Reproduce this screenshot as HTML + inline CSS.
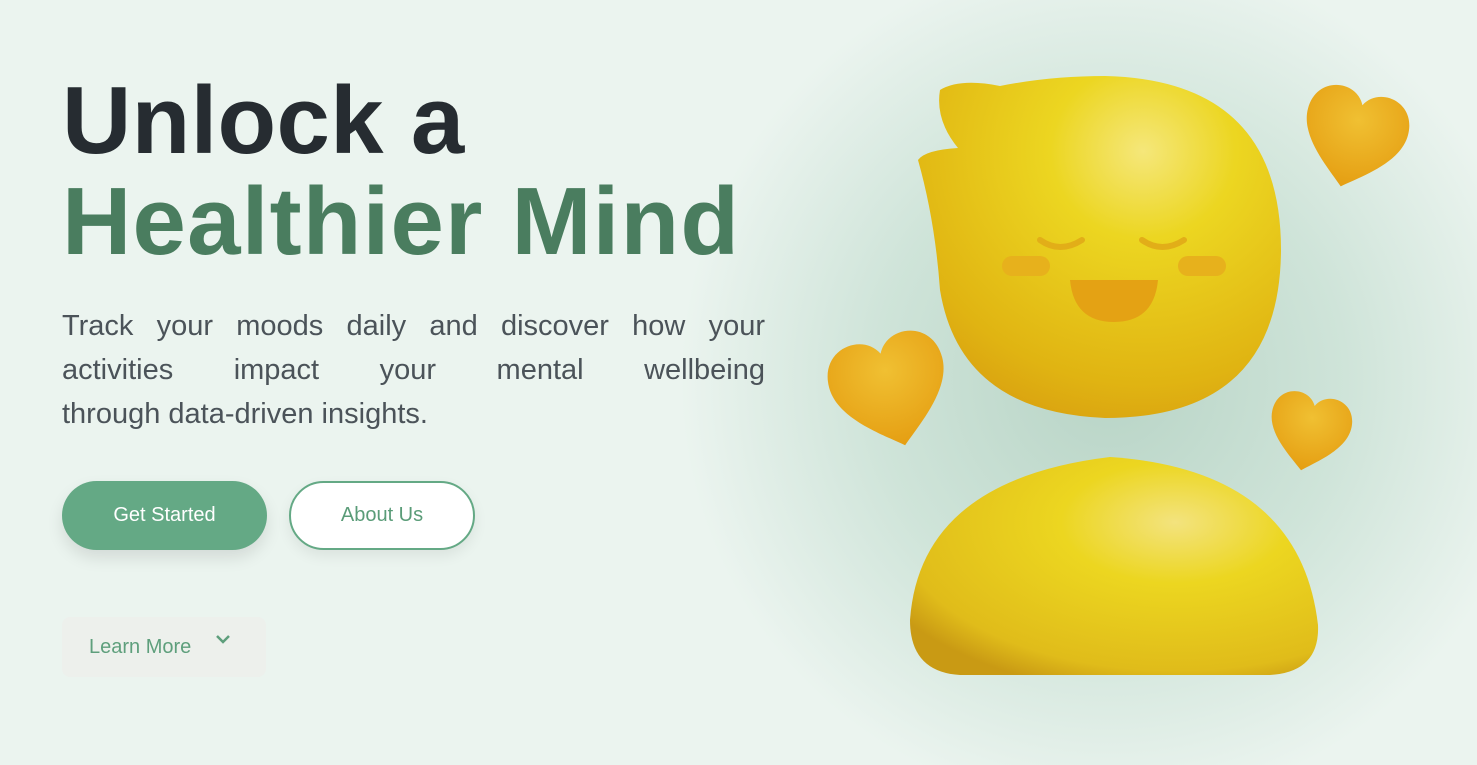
<!DOCTYPE html>
<html><head><meta charset="utf-8"><style>
html,body{margin:0;padding:0}
body{width:1477px;height:765px;overflow:hidden;position:relative;background:#ebf4ef;font-family:"Liberation Sans",sans-serif}
h1{position:absolute;left:62px;top:70px;margin:0;font-size:96px;line-height:101px;font-weight:bold;color:#262c31;letter-spacing:0.3px}
h1 span{color:#4a7d5f;letter-spacing:1.2px}
.p{position:absolute;left:62px;top:304px;width:703px;margin:0;font-size:29px;line-height:44px;color:#4b5359}
.p div{text-align:justify;text-align-last:justify;white-space:nowrap}
.p div.l{text-align-last:left}
.b{position:absolute;top:481px;height:69px;border-radius:35px;box-sizing:border-box;font-size:20px;display:flex;align-items:center;justify-content:center}
.g{left:62px;width:205px;background:#64a985;color:#fff;box-shadow:0 8px 16px rgba(0,0,0,.1)}
.w{left:289px;width:186px;background:#fff;border:2px solid #64a985;color:#5a9c78;box-shadow:0 6px 14px rgba(0,0,0,.07)}
.lm{position:absolute;left:62px;top:617px;width:204px;height:60px;background:#edf0ec;border-radius:8px;color:#5e9f7c;font-size:20px}
.lm span{position:absolute;left:27px;top:19px}
</style></head><body>
<svg width="1477" height="765" style="position:absolute;left:0;top:0">
<defs>
<radialGradient id="bg" cx="1110" cy="380" r="430" gradientUnits="userSpaceOnUse"><stop offset="0" stop-color="#b8d4c6"/><stop offset=".55" stop-color="#cfe4d9"/><stop offset="1" stop-color="#ebf4ef"/></radialGradient>
<radialGradient id="y" cx=".62" cy=".22" r=".85"><stop offset="0" stop-color="#f5e77a"/><stop offset=".3" stop-color="#ecd621"/><stop offset=".8" stop-color="#e0b412"/><stop offset="1" stop-color="#d9a010"/></radialGradient>
<radialGradient id="yb" cx=".65" cy=".3" r=".8"><stop offset="0" stop-color="#f3e37e"/><stop offset=".35" stop-color="#ecd620"/><stop offset=".85" stop-color="#e0bc1a"/><stop offset="1" stop-color="#c99a14"/></radialGradient>
<radialGradient id="h" cx=".5" cy=".3" r=".7"><stop offset="0" stop-color="#f0c032"/><stop offset="1" stop-color="#e59e12"/></radialGradient>
<path id="hrt" d="M0 -25 C10 -45 45 -40 45 -10 C45 15 15 35 0 48 C-15 35 -45 15 -45 -10 C-45 -40 -10 -45 0 -25Z"/>
</defs>
<rect x="640" y="0" width="837" height="765" fill="url(#bg)"/>
<path d="M940 90 Q960 78 1000 86 Q1050 76 1105 76 Q1281 80 1281 250 Q1280 418 1105 418 Q960 412 940 290 Q935 220 918 160 Q925 150 958 148 Q935 120 940 90Z" fill="url(#y)"/>
<path d="M1040 240 q20 14 42 0 M1142 240 q20 14 42 0" stroke="#e2ae18" stroke-width="6" fill="none" stroke-linecap="round"/>
<rect x="1002" y="256" width="48" height="20" rx="10" fill="#e7b11c"/>
<rect x="1178" y="256" width="48" height="20" rx="10" fill="#e7b11c"/>
<path d="M1070 280 h88 q-4 42 -44 42 q-40 0 -44 -42Z" fill="#e4a214"/>
<path d="M910 620 Q920 480 1110 457 Q1300 470 1318 625 Q1320 672 1270 675 L960 675 Q910 672 910 620Z" fill="url(#yb)"/>
<use href="#hrt" fill="url(#h)" transform="translate(1355 133) rotate(15) scale(1.15)"/>
<use href="#hrt" fill="url(#h)" transform="translate(889 385) rotate(-15) scale(1.3)"/>
<use href="#hrt" fill="url(#h)" transform="translate(1310 428) rotate(12) scale(0.9)"/>
</svg>
<h1>Unlock a<br><span>Healthier Mind</span></h1>
<div class="p"><div>Track your moods daily and discover how your</div><div>activities impact your mental wellbeing</div><div class="l">through data-driven insights.</div></div>
<div class="b g">Get Started</div>
<div class="b w">About Us</div>
<div class="lm"><span>Learn More</span><svg style="position:absolute;left:153px;top:16px" width="16" height="12"><path d="M2 3 L8 9 L14 3" stroke="#5e9f7c" stroke-width="2.5" fill="none"/></svg></div>
</body></html>
